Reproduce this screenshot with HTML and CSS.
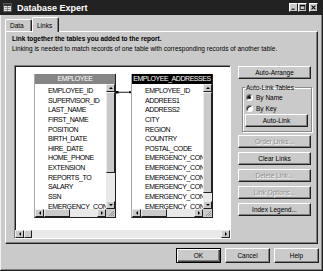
FILE: index.html
```html
<!DOCTYPE html>
<html lang="en">
<head>
    <meta charset="UTF-8">
    <title>Database Expert</title>
    <link rel="stylesheet" href="styles.css">
</head>
<body>
    <div class="window">
        <div class="titlebar">
            <svg class="app-icon" viewBox="0 0 9 9">
                <rect x="0.5" y="0.5" width="8" height="8" fill="#e6e6e6" stroke="#555"/>
                <rect x="1" y="1" width="7" height="2" fill="#333"/>
                <path d="M1.5 4.5h6M1.5 6.5h6M4.5 3v5" stroke="#777" stroke-width="0.8"/>
            </svg>
            <span class="title">Database Expert</span>
            <span class="cap-btn">
                <svg viewBox="0 0 9 9"><rect x="2" y="6" width="4" height="1.4" fill="#000"/></svg>
            </span>
            <span class="cap-btn">
                <svg viewBox="0 0 9 9"><rect x="1.5" y="1.5" width="6" height="5.5" fill="none" stroke="#000"/><rect x="1.5" y="1.5" width="6" height="1.5" fill="#000"/></svg>
            </span>
            <span class="cap-btn close">
                <svg viewBox="0 0 9 9"><path d="M2 2l5 5M7 2l-5 5" stroke="#000" stroke-width="1.3"/></svg>
            </span>
        </div>

        <div class="tabs">
            <span class="tab">Data</span>
            <span class="tab active">Links</span>
        </div>

        <div class="panel">
            <p class="intro lead">Link together the tables you added to the report.</p>
            <p class="intro">Linking is needed to match records of one table with corresponding records of another table.</p>

            <div class="panel-body">
                <div class="canvas">
                    <div class="diagram">
                        <div class="tbl">
                            <div class="tbl-title">EMPLOYEE</div>
                            <div class="tbl-list">
                                <div class="rows">
                                    <div class="row">EMPLOYEE_ID</div>
                                    <div class="row">SUPERVISOR_ID</div>
                                    <div class="row">LAST_NAME</div>
                                    <div class="row">FIRST_NAME</div>
                                    <div class="row">POSITION</div>
                                    <div class="row">BIRTH_DATE</div>
                                    <div class="row">HIRE_DATE</div>
                                    <div class="row">HOME_PHONE</div>
                                    <div class="row">EXTENSION</div>
                                    <div class="row">REPORTS_TO</div>
                                    <div class="row">SALARY</div>
                                    <div class="row">SSN</div>
                                    <div class="row">EMERGENCY_CONTACT</div>
                                </div>
                                <div class="vscroll">
                                    <span class="sb-btn up"></span>
                                    <span class="sb-thumb v-short"></span>
                                    <span class="track"></span>
                                    <span class="sb-btn down"></span>
                                </div>
                            </div>
                            <div class="hscroll">
                                <span class="sb-btn left"></span>
                                <span class="sb-thumb h-tbl"></span>
                                <span class="track"></span>
                                <span class="sb-btn right"></span>
                                <span class="grip">
                                    <svg viewBox="0 0 9 8"><path d="M8 2L3 7M8 4L5 7M8 6L7 7" stroke="#888" stroke-width="0.8"/></svg>
                                </span>
                            </div>
                        </div>

                        <svg class="link" viewBox="0 0 16 5">
                            <rect x="0" y="1" width="2.5" height="2.5" fill="#000"/>
                            <path d="M2 2.25h12" stroke="#000" stroke-width="0.9"/>
                            <rect x="13" y="1.2" width="2" height="2" fill="#000"/>
                        </svg>

                        <div class="tbl active">
                            <div class="tbl-title">EMPLOYEE_ADDRESSES</div>
                            <div class="tbl-list">
                                <div class="rows">
                                    <div class="row">EMPLOYEE_ID</div>
                                    <div class="row">ADDREES1</div>
                                    <div class="row">ADDRESS2</div>
                                    <div class="row">CITY</div>
                                    <div class="row">REGION</div>
                                    <div class="row">COUNTRY</div>
                                    <div class="row">POSTAL_CODE</div>
                                    <div class="row">EMERGENCY_CONTACT</div>
                                    <div class="row">EMERGENCY_CONTACT</div>
                                    <div class="row">EMERGENCY_CONTACT</div>
                                    <div class="row">EMERGENCY_CONTACT</div>
                                    <div class="row">EMERGENCY_CONTACT</div>
                                    <div class="row">EMERGENCY_CONTACT</div>
                                </div>
                                <div class="vscroll">
                                    <span class="sb-btn up"></span>
                                    <span class="sb-thumb v-long"></span>
                                    <span class="track"></span>
                                    <span class="sb-btn down"></span>
                                </div>
                            </div>
                            <div class="hscroll">
                                <span class="sb-btn left"></span>
                                <span class="sb-thumb h-tbl"></span>
                                <span class="track"></span>
                                <span class="sb-btn right"></span>
                                <span class="grip">
                                    <svg viewBox="0 0 9 8"><path d="M8 2L3 7M8 4L5 7M8 6L7 7" stroke="#888" stroke-width="0.8"/></svg>
                                </span>
                            </div>
                        </div>
                    </div>
                    <div class="hscroll canvas-scroll">
                        <span class="sb-btn left"></span>
                        <span class="sb-thumb h-canvas"></span>
                        <span class="track"></span>
                        <span class="sb-btn right"></span>
                    </div>
                </div>

                <div class="side">
                    <span class="btn">Auto-Arrange</span>
                    <fieldset class="group">
                        <legend>Auto-Link Tables</legend>
                        <div class="radio-row"><span class="radio on"></span>By Name</div>
                        <div class="radio-row"><span class="radio"></span>By Key</div>
                        <span class="btn inner">Auto-Link</span>
                    </fieldset>
                    <span class="btn disabled">Order Links...</span>
                    <span class="btn">Clear Links</span>
                    <span class="btn disabled">Delete Link...</span>
                    <span class="btn disabled">Link Options...</span>
                    <span class="btn">Index Legend...</span>
                </div>
            </div>
        </div>

        <div class="footer">
            <span class="btn dlg default">OK</span>
            <span class="btn dlg">Cancel</span>
            <span class="btn dlg">Help</span>
        </div>
    </div>
</body>
</html>
```

FILE: styles.css
```css
* {
    box-sizing: border-box;
}
body {
    margin: 0;
    font-family: "Liberation Sans", Arial, sans-serif;
    font-size: 6.5px;
    color: #000;
    background: #cacaca;
}
.window {
    width: 323px;
    height: 271px;
    background: #cacaca;
    border-right: 1px solid #202020;
    border-bottom: 1px solid #202020;
    box-shadow: inset 1px 0 #f2f2f2, inset -1px -1px #808080;
    display: flex;
    flex-direction: column;
}

/* title bar */
.titlebar {
    height: 15px;
    flex: none;
    background: #222;
    color: #fff;
    display: flex;
    align-items: center;
    padding: 0 4px 0 3px;
}
.app-icon {
    width: 9px;
    height: 9px;
    margin-right: 5px;
}
.title {
    flex: 1;
    font-size: 9px;
    font-weight: bold;
}
.cap-btn {
    width: 9px;
    height: 9px;
    background: #cacaca;
    border: 1px solid;
    border-color: #fff #202020 #202020 #fff;
    display: flex;
}
.cap-btn svg {
    width: 100%;
    height: 100%;
}
.cap-btn.close {
    margin-left: 2px;
}

/* tabs */
.tabs {
    height: 16px;
    flex: none;
    display: flex;
    align-items: flex-end;
    padding-left: 5px;
}
.tab {
    width: 27px;
    height: 12px;
    padding-left: 4px;
    border: 1px solid;
    border-color: #fff #202020 transparent #fff;
    border-bottom: none;
    border-radius: 2px 2px 0 0;
    box-shadow: inset -1px 0 #808080;
    background: #cacaca;
    display: flex;
    align-items: center;
}
.tab.active {
    height: 15px;
    margin-bottom: -1px;
    position: relative;
    z-index: 1;
}

/* tab page */
.panel {
    width: 313px;
    height: 213px;
    flex: none;
    margin-left: 5px;
    padding: 2px 4px 0 6px;
    border: 1px solid;
    border-color: #fff #202020 #202020 #fff;
    box-shadow: inset -1px -1px #808080;
}
.intro {
    margin: 0;
    line-height: 10px;
    white-space: nowrap;
}
.intro.lead {
    font-weight: bold;
}
.panel-body {
    display: flex;
    gap: 7px;
    margin: 11px 0 0 2px;
}

/* link canvas */
.canvas {
    width: 217px;
    height: 174px;
    flex: none;
    background: #fff;
    border: 1px solid;
    border-color: #808080 #fff #fff #808080;
    box-shadow: inset 1px 1px #202020;
    display: flex;
    flex-direction: column;
}
.diagram {
    flex: 1;
    position: relative;
    display: flex;
    align-items: flex-start;
    gap: 15px;
    padding: 8px 0 0 19px;
}
.link {
    position: absolute;
    left: 101px;
    top: 24px;
    width: 16px;
    height: 5px;
}
.tbl {
    width: 82px;
    background: #fff;
    border-left: 1px solid #a8a8a8;
    border-right: 1px solid #202020;
    border-bottom: 1px solid #202020;
    display: flex;
    flex-direction: column;
}
.tbl-title {
    height: 10px;
    line-height: 10px;
    background: #858585;
    color: #fff;
    text-align: center;
    font-size: 7px;
    letter-spacing: -0.45px;
    white-space: nowrap;
    overflow: hidden;
}
.tbl.active .tbl-title {
    background: #000;
}
.tbl-list {
    height: 125px;
    display: flex;
}
.rows {
    flex: 1;
    min-width: 0;
    overflow: hidden;
    padding: 2px 0 0 13px;
}
.row {
    height: 9.65px;
    line-height: 9.65px;
    font-size: 7px;
    letter-spacing: -0.4px;
    white-space: nowrap;
}

/* scroll bars */
.vscroll {
    width: 9px;
    flex: none;
    display: flex;
    flex-direction: column;
    background: #e9e9e9;
}
.hscroll {
    height: 8px;
    flex: none;
    display: flex;
    background: #e9e9e9;
}
.track {
    flex: 1;
}
.sb-btn {
    width: 9px;
    height: 8px;
    flex: none;
    background: #cacaca;
    border: 1px solid;
    border-color: #ececec #202020 #202020 #ececec;
    display: flex;
    align-items: center;
    justify-content: center;
}
.sb-btn::after {
    content: "";
    width: 0;
    height: 0;
}
.sb-btn.up::after {
    border-left: 2px solid transparent;
    border-right: 2px solid transparent;
    border-bottom: 2px solid #000;
}
.sb-btn.down::after {
    border-left: 2px solid transparent;
    border-right: 2px solid transparent;
    border-top: 2px solid #000;
}
.sb-btn.left::after {
    border-top: 2px solid transparent;
    border-bottom: 2px solid transparent;
    border-right: 2px solid #000;
}
.sb-btn.right::after {
    border-top: 2px solid transparent;
    border-bottom: 2px solid transparent;
    border-left: 2px solid #000;
}
.sb-thumb {
    flex: none;
    background: #cacaca;
    border: 1px solid;
    border-color: #ececec #202020 #202020 #ececec;
}
.v-short {
    height: 81px;
}
.v-long {
    height: 101px;
}
.h-tbl {
    width: 26px;
}
.h-canvas {
    width: 8px;
}
.grip {
    width: 9px;
    flex: none;
    background: #cacaca;
    display: flex;
}
.grip svg {
    width: 100%;
    height: 100%;
}

/* right column */
.side {
    width: 74px;
    flex: none;
    display: flex;
    flex-direction: column;
    padding-top: 1px;
}
.btn {
    width: 73px;
    height: 13px;
    flex: none;
    margin-bottom: 4px;
    background: #cacaca;
    border: 1px solid;
    border-color: #fff #202020 #202020 #fff;
    box-shadow: inset -1px -1px #808080;
    display: flex;
    align-items: center;
    justify-content: center;
    white-space: nowrap;
}
.btn.disabled {
    color: #8e8e8e;
    text-shadow: 1px 1px #fff;
}
.group {
    width: 70px;
    margin: 0 0 3px 4px;
    padding: 0 3px 4px 2px;
    border: 1px solid #8a8a8a;
    box-shadow: 1px 1px #fff, inset 1px 1px #fff;
    min-width: 0;
}
.group legend {
    padding: 0 1px;
    line-height: 9px;
}
.radio-row {
    height: 11px;
    display: flex;
    align-items: center;
    gap: 3px;
    padding-left: 1px;
}
.radio {
    width: 7px;
    height: 7px;
    border-radius: 50%;
    background: #fff;
    border: 1px solid;
    border-color: #808080 #fff #fff #808080;
    box-shadow: inset 1px 1px #202020;
    display: flex;
    align-items: center;
    justify-content: center;
}
.radio.on::after {
    content: "";
    width: 3px;
    height: 3px;
    border-radius: 50%;
    background: #000;
}
.btn.inner {
    width: 63px;
    margin: 0;
}

/* dialog buttons */
.footer {
    display: flex;
    justify-content: flex-end;
    gap: 4px;
    padding: 4px 3px 0 0;
}
.btn.dlg {
    width: 45px;
    height: 15px;
    margin: 0;
}
.btn.default {
    border-color: #000;
    box-shadow: inset 1px 1px #fff, inset -1px -1px #404040, inset -2px -2px #808080;
}
```
